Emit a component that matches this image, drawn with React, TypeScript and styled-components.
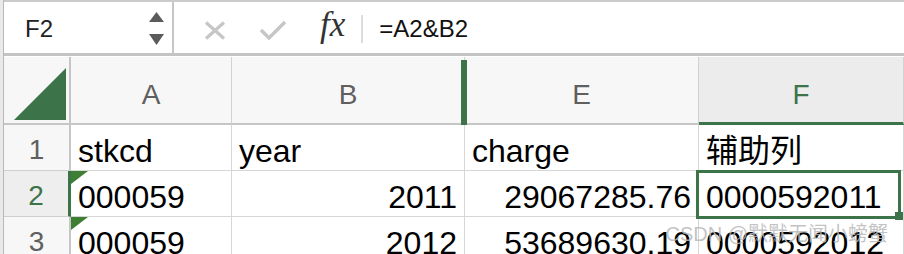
import React from "react";
import styled, { createGlobalStyle } from "styled-components";

const GREEN = "#3c7349";
const GRID = "#d6d6d6";
const HEAD_LINE = "#c6c6c6";

const GlobalStyle = createGlobalStyle`
  html, body {
    margin: 0;
    padding: 0;
    background: #e9e9e9;
    overflow: hidden;
  }
  body {
    font-family: "Liberation Sans", Arial, "Noto Sans CJK SC", sans-serif;
  }
`;

const Window = styled.div`
  position: relative;
  width: 900px;
  height: 254px;
  margin-left: 3px;
  border-left: 1px solid #b9b9b9;
  background: #fff;
  overflow: hidden;
`;

const TopBar = styled.div`
  display: flex;
  height: 51px;
  border-top: 2px solid #cbcbcb;
  border-bottom: 3px solid #c4c4c4;
  margin-bottom: 1px;
  background: #fff;
`;

const NameBox = styled.div`
  display: flex;
  align-items: flex-start;
  width: 168px;
  border-right: 2px solid ${HEAD_LINE};
`;

const NameText = styled.div`
  flex: 1;
  padding: 15px 0 0 21px;
  font-size: 24px;
  line-height: 24px;
  color: #222;
`;

const Spinner = styled.svg`
  margin: 10px 8px 0 0;
`;

const FormulaBar = styled.div`
  flex: 1;
  display: flex;
  align-items: flex-start;
`;

const CancelIcon = styled.svg`
  margin: 19px 0 0 30px;
`;

const ConfirmIcon = styled.svg`
  margin: 18px 0 0 33px;
`;

const Fx = styled.span`
  margin: 6px 0 0 33px;
  font-family: "Liberation Serif", "DejaVu Serif", serif;
  font-style: italic;
  font-size: 35px;
  line-height: 34px;
  color: #333;
`;

const Divider = styled.div`
  width: 2px;
  height: 28px;
  margin: 13px 0 0 16px;
  background: #dcdcdc;
`;

const Formula = styled.div`
  padding: 15px 0 0 16px;
  font-size: 24px;
  line-height: 24px;
  color: #111;
`;

const HeaderRow = styled.div`
  display: flex;
  height: 68px;
  background: #f7f7f7;
`;

const Corner = styled.div`
  box-sizing: border-box;
  display: flex;
  justify-content: flex-end;
  align-items: flex-end;
  width: 67px;
  padding: 0 3px 3px 0;
  border-right: 2px solid ${HEAD_LINE};
  border-bottom: 2px solid ${HEAD_LINE};
`;

const ColHead = styled.div<{ $w?: number; $active?: boolean; $hiddenBefore?: boolean }>`
  position: relative;
  box-sizing: border-box;
  ${(p) => (p.$w ? `width: ${p.$w}px;` : "flex: 1;")}
  padding-top: 24px;
  text-align: center;
  font-size: 28px;
  line-height: 28px;
  color: ${(p) => (p.$active ? GREEN : "#5f5f5f")};
  background: ${(p) => (p.$active ? "#ececec" : "transparent")};
  border-right: 1px solid #d2d2d2;
  border-bottom: ${(p) => (p.$active ? `3px solid ${GREEN}` : `2px solid ${HEAD_LINE}`)};

  ${(p) =>
    p.$hiddenBefore &&
    `
    &::before {
      content: "";
      position: absolute;
      left: -4px;
      top: 3px;
      bottom: -2px;
      width: 6px;
      background: ${GREEN};
    }
  `}
`;

const Row = styled.div`
  display: flex;
  height: 46px;
  box-sizing: border-box;
  border-bottom: 1px solid ${GRID};
`;

const RowHead = styled.div<{ $active?: boolean }>`
  box-sizing: border-box;
  width: 67px;
  padding-top: 11px;
  text-align: center;
  font-size: 28px;
  line-height: 28px;
  color: ${(p) => (p.$active ? GREEN : "#5f5f5f")};
  background: ${(p) => (p.$active ? "#eeeeee" : "#f7f7f7")};
  border-right: ${(p) => (p.$active ? `3px solid ${GREEN}` : `2px solid ${HEAD_LINE}`)};
  margin-bottom: -1px;
  border-bottom: 1px solid #cfcfcf;
`;

const Cell = styled.div<{ $w?: number; $right?: boolean; $flag?: boolean; $selected?: boolean }>`
  position: relative;
  box-sizing: border-box;
  ${(p) => (p.$w ? `width: ${p.$w}px;` : "flex: 1;")}
  padding: 10px 7px 0;
  font-size: 32px;
  line-height: 32px;
  color: #000;
  white-space: nowrap;
  text-align: ${(p) => (p.$right ? "right" : "left")};
  border-right: 1px solid ${GRID};
  ${(p) => p.$selected && "z-index: 2;"}

  ${(p) =>
    p.$flag &&
    `
    &::before {
      content: "";
      position: absolute;
      top: 0;
      left: 0;
      border-top: 13px solid #3f7f33;
      border-right: 17px solid transparent;
    }
  `}

  ${(p) =>
    p.$selected &&
    `
    &::after {
      content: "";
      position: absolute;
      top: -1px;
      left: -3px;
      right: 2px;
      bottom: -3px;
      border: 3px solid ${GREEN};
      pointer-events: none;
    }
  `}
`;

const FillHandle = styled.span`
  position: absolute;
  right: 0;
  bottom: -4px;
  width: 8px;
  height: 8px;
  background: ${GREEN};
  z-index: 3;
`;

const Watermark = styled.div`
  position: absolute;
  right: 16px;
  top: 222px;
  font-family: "Liberation Sans", "Noto Sans CJK SC", sans-serif;
  font-size: 20px;
  line-height: 24px;
  color: rgba(185, 185, 185, 0.85);
  z-index: 5;
`;

const widths = [161, 233, 234];
const columns = ["A", "B", "E", "F"];

const rows = [
  { n: "1", cells: ["stkcd", "year", "charge", "辅助列"], right: [false, false, false, false] },
  { n: "2", cells: ["000059", "2011", "29067285.76", "0000592011"], right: [false, true, true, false], active: true, flag: true },
  { n: "3", cells: ["000059", "2012", "53689630.19", "0000592012"], right: [false, true, true, false], flag: true },
];

export default function App() {
  return (
    <>
      <GlobalStyle />
      <Window>
        <TopBar>
          <NameBox>
            <NameText>F2</NameText>
            <Spinner width="15" height="34" viewBox="0 0 15 34">
              <polygon points="7.5,0 15,10 0,10" fill="#5b5b5b" />
              <polygon points="0,22 15,22 7.5,33" fill="#5b5b5b" />
            </Spinner>
          </NameBox>
          <FormulaBar>
            <CancelIcon width="22" height="19" viewBox="0 0 22 19">
              <path d="M2 1.5 L20 17.5 M20 1.5 L2 17.5" stroke="#c6c6c6" strokeWidth="3.2" fill="none" />
            </CancelIcon>
            <ConfirmIcon width="28" height="20" viewBox="0 0 28 20">
              <polyline points="2,10 10,18 26,2" stroke="#c6c6c6" strokeWidth="3.4" fill="none" />
            </ConfirmIcon>
            <Fx>fx</Fx>
            <Divider />
            <Formula>=A2&amp;B2</Formula>
          </FormulaBar>
        </TopBar>

        <HeaderRow>
          <Corner>
            <svg width="52" height="52" viewBox="0 0 52 52">
              <polygon points="52,0 52,52 0,52" fill={GREEN} />
            </svg>
          </Corner>
          {columns.map((c, i) => (
            <ColHead key={c} $w={widths[i]} $active={c === "F"} $hiddenBefore={c === "E"}>
              {c}
            </ColHead>
          ))}
        </HeaderRow>

        {rows.map((r) => (
          <Row key={r.n}>
            <RowHead $active={r.active}>{r.n}</RowHead>
            {r.cells.map((v, i) => {
              const selected = r.active && i === 3;
              return (
                <Cell
                  key={i}
                  $w={widths[i]}
                  $right={r.right[i]}
                  $flag={r.flag && i === 0}
                  $selected={selected}
                >
                  {v}
                  {selected && <FillHandle />}
                </Cell>
              );
            })}
          </Row>
        ))}

        <Watermark>CSDN @默默无闻小螃蟹</Watermark>
      </Window>
    </>
  );
}
